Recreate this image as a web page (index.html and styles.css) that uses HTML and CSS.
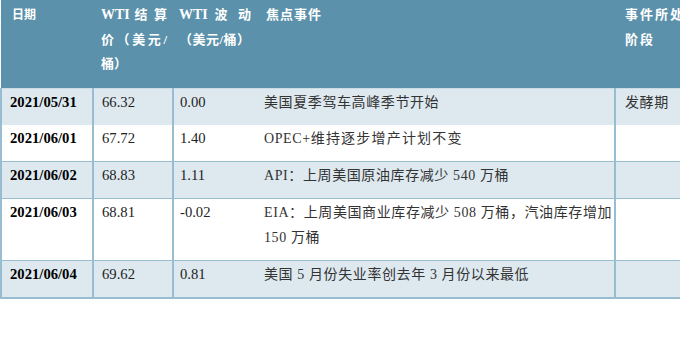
FILE: index.html
```html
<!DOCTYPE html>
<html lang="zh-CN">
<head>
<meta charset="utf-8">
<title>WTI</title>
<link rel="stylesheet" href="styles.css">
</head>
<body>
<table class="tbl">
  <colgroup>
    <col class="c1"><col class="c2"><col class="c3"><col class="c4"><col class="c5">
  </colgroup>
  <thead>
    <tr>
      <th class="h-date">日期</th>
      <th class="h-price">
        <span class="jl"><span class="lat">WTI</span> 结 算</span>
        <span class="jl">价（美元/</span>
        <span class="ln">桶）</span>
      </th>
      <th class="h-fl">
        <span class="jl jl2"><span class="lat">WTI</span> 波 动</span>
        <span class="ln sp">（美元/桶）</span>
      </th>
      <th class="h-ev">焦点事件</th>
      <th class="h-st">事件所处<br>阶段</th>
    </tr>
  </thead>
  <tbody>
    <tr class="alt">
      <td class="d">2021/05/31</td><td class="p">66.32</td><td class="f">0.00</td>
      <td class="e">美国夏季驾车高峰季节开始</td><td class="s">发酵期</td>
    </tr>
    <tr>
      <td class="d">2021/06/01</td><td class="p">67.72</td><td class="f">1.40</td>
      <td class="e">OPEC+<span class="wide">维持逐步增产计划不变</span></td><td class="s"></td>
    </tr>
    <tr class="alt sep">
      <td class="d">2021/06/02</td><td class="p">68.83</td><td class="f">1.11</td>
      <td class="e">API：上周美国原油库存减少 540 万桶</td><td class="s"></td>
    </tr>
    <tr class="sep">
      <td class="d">2021/06/03</td><td class="p">68.81</td><td class="f">-0.02</td>
      <td class="e">EIA：上周美国商业库存减少 508 万桶，汽油库存增加<br>150 万桶</td><td class="s"></td>
    </tr>
    <tr class="alt sep">
      <td class="d">2021/06/04</td><td class="p">69.62</td><td class="f">0.81</td>
      <td class="e">美国 5 月份失业率创去年 3 月份以来最低</td><td class="s"></td>
    </tr>
  </tbody>
</table>
</body>
</html>
```
FILE: styles.css
```css
html, body {
  margin: 0;
  padding: 0;
  background: #ffffff;
  overflow: hidden;
  width: 680px;
}

.tbl {
  border-collapse: collapse;
  table-layout: fixed;
  width: 720px;
  font-family: "Liberation Serif", "Noto Sans CJK SC", serif;
  font-size: 14.67px;
  color: #222;
}

.c1 { width: 92px; }
.c2 { width: 80px; }
.c3 { width: 85px; }
.c4 { width: 357px; }
.c5 { width: 106px; }

thead tr {
  background: #5b91ab;
  height: 88px;
}

th {
  color: #ffffff;
  font-weight: bold;
  font-size: 13px;
  line-height: 24.5px;
  text-align: left;
  vertical-align: top;
  padding: 3px 0 0 0;
  white-space: nowrap;
  overflow: hidden;
}

.lat { font-size: 14px; }

.h-date { padding-left: 11px; font-size: 12px; }
.h-price { padding-left: 8px; }
.h-fl { padding-left: 6px; }
.h-ev { padding-left: 8px; letter-spacing: 1px; }
.h-st { padding-left: 10px; letter-spacing: 2px; }

.jl, .ln { display: block; }
.jl {
  width: 66px;
  text-align: justify;
  text-align-last: justify;
}
.jl2 { width: 72px; }
.sp { letter-spacing: 0.5px; }

tbody tr { background: #ffffff; }
tbody tr.alt { background: #dde8ef; }
tbody tr:first-child td { border-top: 1px solid #c9dbe5; }
tbody tr.sep td { border-top: 1px solid #98bdd1; }
tbody tr:last-child td { border-bottom: 2px solid #98bdd1; }

td {
  line-height: 25px;
  padding: 1px 0 10px 0;
  vertical-align: top;
  white-space: nowrap;
  overflow: hidden;
}

td.d {
  font-weight: bold;
  color: #000;
  padding-left: 8px;
  border-left: 2px solid #98bdd1;
}
td.p {
  padding-left: 8px;
  border-left: 2px solid #98bdd1;
}
td.f {
  padding-left: 6px;
  border-left: 2px solid #98bdd1;
}
td.e {
  padding-left: 6px;
  color: #333;
  font-size: 14px;
  letter-spacing: 0.6px;
}
.wide { letter-spacing: 1.2px; }
td.s {
  padding-left: 9px;
  color: #333;
  font-size: 14px;
  letter-spacing: 0.6px;
  border-left: 2px solid #98bdd1;
}
```
